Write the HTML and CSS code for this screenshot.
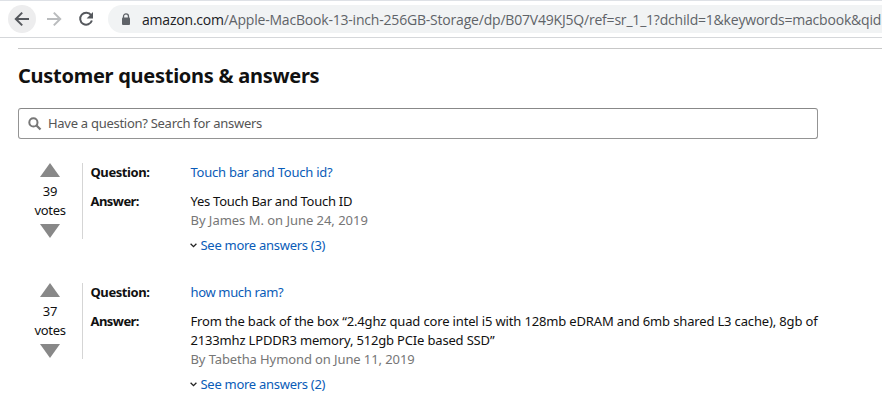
FILE: index.html
```html
<!DOCTYPE html>
<html lang="en">
<head>
<meta charset="utf-8">
<title>Customer questions &amp; answers</title>
<link rel="stylesheet" href="styles.css">
</head>
<body>
<header class="toolbar">
  <span class="nav-btn active"><svg width="16" height="16" viewBox="0 0 16 16"><path d="M15 8H2.2M8.2 1.6L1.8 8l6.4 6.4" fill="none" stroke="#55585d" stroke-width="2"/></svg></span>
  <span class="nav-btn"><svg width="16" height="16" viewBox="0 0 16 16"><path d="M1 8h12.8M7.8 1.6L14.2 8l-6.4 6.4" fill="none" stroke="#babcbe" stroke-width="2"/></svg></span>
  <span class="nav-btn"><svg width="16" height="16" viewBox="0 0 16 16"><path d="M13.1 4.2A6 6 0 1 0 13.9 9.5" fill="none" stroke="#55585d" stroke-width="2"/><path d="M15 1v6.4H8.6z" fill="#55585d"/></svg></span>
  <div class="address">
    <svg width="10" height="13" viewBox="0 0 10 13"><path d="M2.5 5V3.4a2.5 2.5 0 0 1 5 0V5" fill="none" stroke="#5f6368" stroke-width="1.3"/><rect x="1" y="4.5" width="8" height="7.5" rx="1" fill="#5f6368"/></svg>
    <span class="url"><span class="host">amazon.com</span>/Apple-MacBook-13-inch-256GB-Storage/dp/B07V49KJ5Q/ref=sr_1_1?dchild=1&amp;keywords=macbook&amp;qid</span>
  </div>
</header>
<main class="page">
  <hr class="divider">
  <h2 class="title">Customer questions &amp; answers</h2>
  <div class="search">
    <svg width="14" height="14" viewBox="0 0 14 14"><circle cx="5.4" cy="5.4" r="4.1" fill="none" stroke="#777" stroke-width="2"/><path d="M8.5 8.5l4 4" stroke="#777" stroke-width="2.3"/></svg>
    <span class="placeholder">Have a question? Search for answers</span>
  </div>
  <section class="entry">
    <div class="votes">
      <svg width="20" height="14" viewBox="0 0 20 14"><path d="M10 0l10 14H0z" fill="#888"/></svg>
      <div class="count">39<br>votes</div>
      <svg width="20" height="14" viewBox="0 0 20 14"><path d="M0 0h20L10 14z" fill="#888"/></svg>
    </div>
    <div class="qa">
      <b class="label question">Question:</b>
      <a class="link q1">Touch bar and Touch id?</a>
      <b class="label answer">Answer:</b>
      <div class="body">
        <div class="a1">Yes Touch Bar and Touch ID</div>
        <div class="byline by1">By James M. on June 24, 2019</div>
        <div class="more"><svg width="7" height="5" viewBox="0 0 7 5"><path d="M.6.8l2.9 2.9L6.4.8" fill="none" stroke="#222" stroke-width="1.3"/></svg><a class="link">See more answers (3)</a></div>
      </div>
    </div>
  </section>
  <section class="entry">
    <div class="votes">
      <svg width="20" height="14" viewBox="0 0 20 14"><path d="M10 0l10 14H0z" fill="#888"/></svg>
      <div class="count">37<br>votes</div>
      <svg width="20" height="14" viewBox="0 0 20 14"><path d="M0 0h20L10 14z" fill="#888"/></svg>
    </div>
    <div class="qa">
      <b class="label question">Question:</b>
      <a class="link q2">how much ram?</a>
      <b class="label answer">Answer:</b>
      <div class="body">
        <div class="a2">From the back of the box “2.4ghz quad core intel i5 with 128mb eDRAM and 6mb shared L3 cache), 8gb of</div>
        <div class="a3">2133mhz LPDDR3 memory, 512gb PCIe based SSD”</div>
        <div class="byline by2">By Tabetha Hymond on June 11, 2019</div>
        <div class="more"><svg width="7" height="5" viewBox="0 0 7 5"><path d="M.6.8l2.9 2.9L6.4.8" fill="none" stroke="#222" stroke-width="1.3"/></svg><a class="link">See more answers (2)</a></div>
      </div>
    </div>
  </section>
</main>
</body>
</html>
```
FILE: styles.css
```css
* { box-sizing: border-box; }
body {
  margin: 0;
  height: 410px;
  overflow: hidden;
  background: #fff;
  color: #111;
  font: 13px/19px "Noto Sans", sans-serif;
}
svg { display: block; flex: none; }
.toolbar {
  display: flex;
  align-items: center;
  gap: 4px;
  height: 38px;
  padding-left: 8px;
  border-top: 1px solid #dee1e6;
  border-bottom: 1px solid #d5d7da;
}
.nav-btn {
  display: flex;
  align-items: center;
  justify-content: center;
  width: 28px;
  height: 28px;
  border-radius: 50%;
}
.active { background: #ededee; }
.address {
  flex: 1;
  display: flex;
  align-items: center;
  gap: 11px;
  height: 28px;
  min-width: 0;
  margin-left: 4px;
  padding-left: 13px;
  border-radius: 14px 0 0 14px;
  background: #f1f3f4;
}
.url {
  color: #5f6368;
  font-family: "Open Sans", sans-serif;
  font-size: 14px;
  letter-spacing: -0.2px;
  white-space: nowrap;
}
.host { color: #202124; }
.page { padding: 10px 0 0 18px; }
.divider {
  height: 1px;
  margin: 0;
  border: 0;
  background: #c7c7c7;
}
.title {
  margin: 14px 0 19px;
  font-size: 20px;
  line-height: 26px;
  font-weight: 700;
  letter-spacing: -0.27px;
  white-space: nowrap;
}
.search {
  display: flex;
  align-items: center;
  gap: 6px;
  width: 800px;
  height: 31px;
  padding-left: 9px;
  border: 1px solid #949494;
  border-top-color: #888;
  border-radius: 3px;
}
.placeholder { color: #555; letter-spacing: -0.28px; }
.entry {
  display: flex;
  margin-top: 24px;
}
.entry + .entry { margin-top: 28px; }
.votes {
  display: flex;
  flex-direction: column;
  align-items: center;
  width: 65px;
  height: 76px;
  border-right: 1px solid #d5d5d5;
}
.count { margin: 5px 0 4px; text-align: center; letter-spacing: -0.3px; }
.qa {
  display: grid;
  grid-template-columns: 100px 640px;
  row-gap: 10px;
  padding-left: 7.5px;
  white-space: nowrap;
}
.label { font-weight: 700; justify-self: start; }
.question { letter-spacing: -0.42px; }
.answer { letter-spacing: -0.55px; }
.link { color: #0a5cb8; justify-self: start; }
.q1 { letter-spacing: -0.24px; }
.q2 { letter-spacing: -0.35px; }
.a1 { letter-spacing: -0.26px; }
.a2 { letter-spacing: -0.155px; }
.a3 { letter-spacing: -0.17px; }
.byline { color: #767676; }
.by1 { letter-spacing: -0.03px; }
.by2 { letter-spacing: -0.1px; }
.more {
  display: flex;
  align-items: center;
  gap: 3.5px;
  margin-top: 6px;
  letter-spacing: -0.28px;
}
.more svg { margin-left: -0.5px; }
```
